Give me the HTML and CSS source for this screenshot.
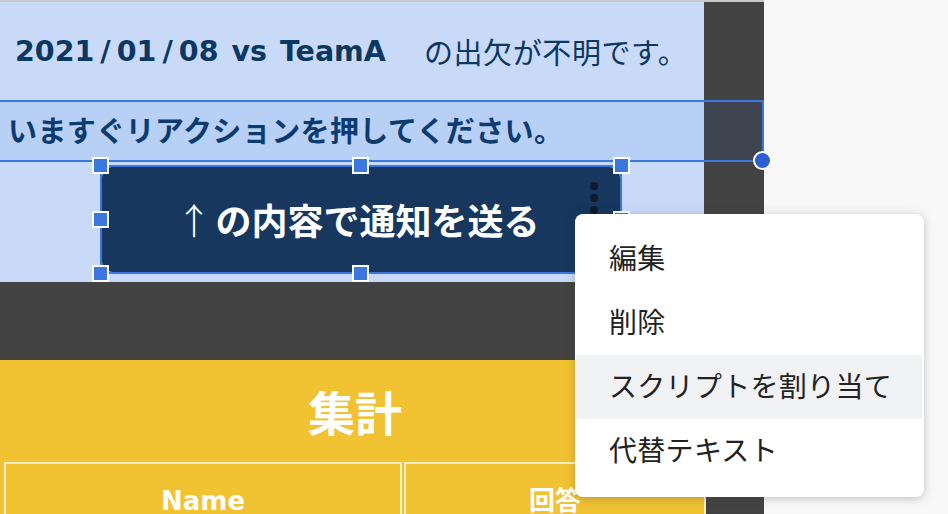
FILE: index.html
```html
<!DOCTYPE html>
<html lang="ja">
<head>
<meta charset="utf-8">
<link rel="stylesheet" href="styles.css">
</head>
<body>
<div class="app">
  <div class="sheet">
    <section class="notice">
      <div class="notice-head">
        <span class="match">2021<span class="sl">/</span>01<span class="sl">/</span>08 vs TeamA</span>
        <span class="status">の出欠が不明です。</span>
      </div>
      <div class="textbox">
        <span class="textbox-text">いますぐリアクションを押してください。</span>
        <div class="textbox-sel"><span class="rot-handle"></span></div>
      </div>
      <div class="button-row">
        <div class="img-frame">
          <div class="send-btn">
            <span class="arrow">↑</span><span class="send-label">の内容で通知を送る</span>
            <span class="kebab"><i></i><i></i><i></i></span>
          </div>
          <span class="h h-tl"></span><span class="h h-tc"></span><span class="h h-tr"></span>
          <span class="h h-ml"></span><span class="h h-mr"></span>
          <span class="h h-bl"></span><span class="h h-bc"></span><span class="h h-br"></span>
        </div>
      </div>
    </section>
    <div class="band"></div>
    <section class="summary">
      <div class="summary-title">集計</div>
      <div class="summary-table">
        <div class="cell">Name</div>
        <div class="cell">回答</div>
      </div>
    </section>
  </div>
  <div class="side"></div>
</div>
<ul class="menu">
  <li class="menu-item">編集</li>
  <li class="menu-item">削除</li>
  <li class="menu-item is-hover">スクリプトを割り当て</li>
  <li class="menu-item">代替テキスト</li>
</ul>
</body>
</html>
```

FILE: styles.css
```css
* { box-sizing: border-box; }
html, body { margin: 0; padding: 0; }
body {
  width: 948px;
  height: 514px;
  overflow: hidden;
  position: relative;
  background: #f7f8f7;
  font-family: "Noto Sans CJK JP", "Noto Sans", sans-serif;
}
.app { display: flex; height: 514px; }
.sheet {
  width: 764px;
  flex: none;
  background: #434343;
  border-top: 2px solid #c6c8c6;
  display: flex;
  flex-direction: column;
}
.side { flex: 1; background: #f7f8f7; }

.notice {
  width: 704px;
  height: 280px;
  flex: none;
  background: #c9daf8;
  display: flex;
  flex-direction: column;
  color: #0b3763;
}
.notice-head {
  height: 98px;
  display: flex;
  align-items: center;
  padding-left: 15px;
  gap: 38px;
}
.match {
  font-family: "DejaVu Sans", "Noto Sans CJK JP", sans-serif;
  font-weight: bold;
  font-size: 28.5px;
  word-spacing: 3px;
}
.sl { margin: 0 6px; }
.status {
  font-size: 29px;
  font-weight: 400;
  letter-spacing: 0.6px;
}
.textbox {
  height: 62px;
  position: relative;
  display: flex;
  align-items: center;
  padding-left: 8px;
  padding-bottom: 5px;
}
.textbox-text {
  font-size: 29px;
  font-weight: 700;
  letter-spacing: 0.4px;
}
.textbox-sel {
  position: absolute;
  left: -2px;
  top: 0;
  width: 766px;
  height: 62px;
  border: 2px solid #3b78de;
  background: rgba(26, 100, 232, 0.09);
}
.rot-handle {
  position: absolute;
  right: -10px;
  bottom: -10px;
  width: 19px;
  height: 19px;
  border-radius: 50%;
  background: #2a5fcf;
  border: 2px solid #fff;
}
.button-row {
  flex: 1;
  padding: 3px 0 0 100px;
}
.img-frame {
  position: relative;
  width: 522px;
  height: 109px;
  border: 2px solid #3b78de;
}
.send-btn {
  position: relative;
  height: 100%;
  background: #17375e;
  border-radius: 10px;
  display: flex;
  align-items: center;
  justify-content: center;
  color: #fff;
  font-size: 36px;
  font-weight: 700;
  padding-bottom: 2px;
  padding-left: 4px;
}
.arrow {
  font-weight: 300;
  margin-right: 14px;
  font-size: 36px;
  width: 15px;
  display: inline-flex;
  justify-content: center;
}
.kebab {
  position: absolute;
  right: 22px;
  top: 15px;
  display: flex;
  flex-direction: column;
  gap: 4px;
}
.kebab i {
  display: block;
  width: 8px;
  height: 8px;
  border-radius: 50%;
  background: #0c1a2c;
}
.h {
  position: absolute;
  width: 17px;
  height: 17px;
  background: #3b78de;
  border: 2px solid #fff;
}
.h-tl, .h-tc, .h-tr { top: -10px; }
.h-ml, .h-mr { top: 44px; }
.h-bl, .h-bc, .h-br { bottom: -10px; }
.h-tl, .h-ml, .h-bl { left: -10px; }
.h-tc, .h-bc { left: 250px; }
.h-tr, .h-mr, .h-br { right: -10px; }

.band { height: 78px; flex: none; }

.summary {
  width: 704px;
  flex: 1;
  background: #f1c232;
  color: #fff;
}
.summary-title {
  height: 102px;
  display: flex;
  align-items: center;
  justify-content: center;
  font-size: 47px;
  font-weight: 700;
  padding-bottom: 2px;
  padding-left: 6px;
}
.summary-table {
  display: grid;
  grid-template-columns: 398px 302px;
  column-gap: 2px;
  padding-left: 4px;
}
.cell {
  border: 2px solid #fcefc4;
  border-bottom: none;
  height: 60px;
  padding-top: 15px;
  text-align: center;
  font-size: 26px;
  font-weight: 700;
  line-height: 44px;
  font-family: "DejaVu Sans", "Noto Sans CJK JP", sans-serif;
}

.menu {
  position: absolute;
  left: 575px;
  top: 214px;
  width: 349px;
  height: 283px;
  margin: 0;
  padding: 13px 2px 14px 1px;
  list-style: none;
  background: #fff;
  border-radius: 8px;
  box-shadow: 0 2px 6px rgba(60, 64, 67, 0.18), 0 1px 14px rgba(60, 64, 67, 0.12);
}
.menu-item {
  height: 64px;
  display: flex;
  align-items: center;
  padding-left: 33px;
  padding-bottom: 5px;
  font-size: 28px;
  color: #222;
  letter-spacing: 0.3px;
}
.menu-item.is-hover { background: #f1f2f3; }
```
